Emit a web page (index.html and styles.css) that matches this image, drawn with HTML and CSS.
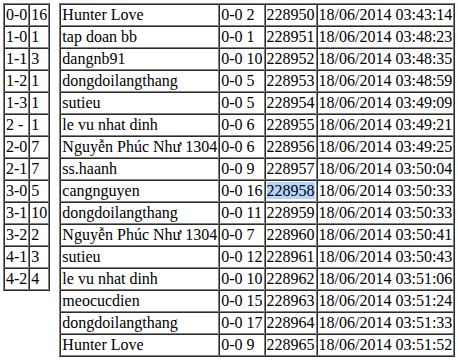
FILE: index.html
```html
<!DOCTYPE html>
<html>
<head>
<meta charset="utf-8">
<link rel="stylesheet" href="styles.css">
</head>
<body>
<div class="wrap">
<table class="grid">
<tr><td>0-0</td><td>16</td></tr>
<tr><td>1-0</td><td>1</td></tr>
<tr><td>1-1</td><td>3</td></tr>
<tr><td>1-2</td><td>1</td></tr>
<tr><td>1-3</td><td>1</td></tr>
<tr><td>2 - </td><td>1</td></tr>
<tr><td>2-0</td><td>7</td></tr>
<tr><td>2-1</td><td>7</td></tr>
<tr><td>3-0</td><td>5</td></tr>
<tr><td>3-1</td><td>10</td></tr>
<tr><td>3-2</td><td>2</td></tr>
<tr><td>4-1</td><td>3</td></tr>
<tr><td>4-2</td><td>4</td></tr>
</table>
<table class="grid">
<tr><td>Hunter Love</td><td>0-0 2</td><td>228950</td><td>18/06/2014 03:43:14</td></tr>
<tr><td>tap doan bb</td><td>0-0 1</td><td>228951</td><td>18/06/2014 03:48:23</td></tr>
<tr><td>dangnb91</td><td>0-0 10</td><td>228952</td><td>18/06/2014 03:48:35</td></tr>
<tr><td>dongdoilangthang</td><td>0-0 5</td><td>228953</td><td>18/06/2014 03:48:59</td></tr>
<tr><td>sutieu</td><td>0-0 5</td><td>228954</td><td>18/06/2014 03:49:09</td></tr>
<tr><td>le vu nhat dinh</td><td>0-0 6</td><td>228955</td><td>18/06/2014 03:49:21</td></tr>
<tr><td>Nguyễn Phúc Như 1304</td><td>0-0 6</td><td>228956</td><td>18/06/2014 03:49:25</td></tr>
<tr><td>ss.haanh</td><td>0-0 9</td><td>228957</td><td>18/06/2014 03:50:04</td></tr>
<tr><td>cangnguyen</td><td>0-0 16</td><td><span class="sel">228958</span></td><td>18/06/2014 03:50:33</td></tr>
<tr><td>dongdoilangthang</td><td>0-0 11</td><td>228959</td><td>18/06/2014 03:50:33</td></tr>
<tr><td>Nguyễn Phúc Như 1304</td><td>0-0 7</td><td>228960</td><td>18/06/2014 03:50:41</td></tr>
<tr><td>sutieu</td><td>0-0 12</td><td>228961</td><td>18/06/2014 03:50:43</td></tr>
<tr><td>le vu nhat dinh</td><td>0-0 10</td><td>228962</td><td>18/06/2014 03:51:06</td></tr>
<tr><td>meocucdien</td><td>0-0 15</td><td>228963</td><td>18/06/2014 03:51:24</td></tr>
<tr><td>dongdoilangthang</td><td>0-0 17</td><td>228964</td><td>18/06/2014 03:51:33</td></tr>
<tr><td>Hunter Love</td><td>0-0 9</td><td>228965</td><td>18/06/2014 03:51:52</td></tr>
</table>
</div>
</body>
</html>
```
FILE: styles.css
```css
html, body {
  margin: 0;
  padding: 0;
  background: #ffffff;
}
body {
  font-family: "Liberation Serif", "Times New Roman", serif;
  font-size: 16px;
  line-height: 18px;
  color: #000000;
}
.wrap {
  display: flex;
  align-items: flex-start;
  gap: 9px;
  padding: 3px;
}
.grid {
  border: 1px outset #808080;
  border-spacing: 0;
}
.grid td {
  border: 1px inset #808080;
  padding: 1px;
  white-space: pre;
}
.sel {
  background: #b4d5fe;
}
```
